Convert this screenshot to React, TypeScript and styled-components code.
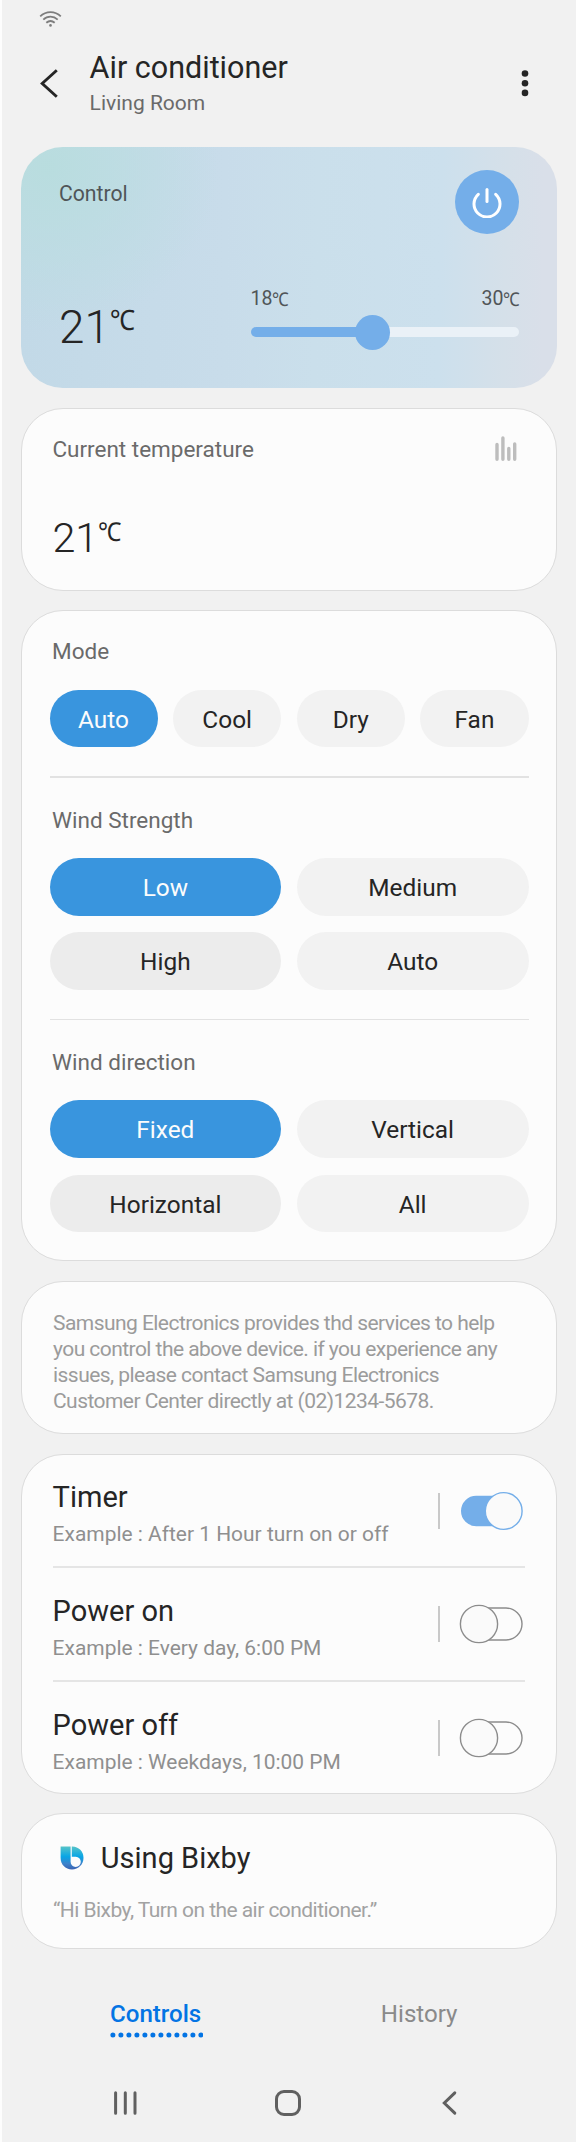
import React, { useState } from 'react';
import styled, { createGlobalStyle } from 'styled-components';

const GlobalStyle = createGlobalStyle`
  * { box-sizing: border-box; }
  body { margin: 0; background: #f1f1f1; }
  button { font: inherit; color: inherit; border: 0; padding: 0; background: none; cursor: pointer; }
  svg { display: block; flex: none; }
`;

const Screen = styled.div`
  display: flex;
  flex-direction: column;
  width: 576px;
  height: 2142px;
  border-left: 2px solid #fdfdfd;
  background: #f1f1f1;
  color: #252525;
  font-family: Roboto, 'Noto Sans', sans-serif;
  overflow: hidden;
`;

const StatusBar = styled.div`
  height: 42px;
  padding: 10px 0 0 37px;
`;

const Header = styled.header`
  display: flex;
  align-items: flex-start;
  height: 105px;
  padding: 0 47px 0 37px;
`;

const BackButton = styled.button`
  width: 20px;
  margin-top: 26px;
`;

const HeaderText = styled.div`
  flex: 1;
  padding: 7px 0 0 30.6px;
`;

const Title = styled.h1`
  margin: 0;
  font-size: 30.5px;
  font-weight: 400;
  line-height: 38px;
`;

const Subtitle = styled.div`
  margin-top: 2px;
  color: #6a6a6a;
  font-size: 21px;
  line-height: 28px;
`;

const MoreButton = styled.button`
  margin-top: 27px;
`;

const Cards = styled.main`
  display: flex;
  flex-direction: column;
  gap: 19.5px;
  padding: 0 19px;
`;

const Card = styled.section<{ $height: number }>`
  height: ${(p) => p.$height}px;
  border: 1px solid #dcdcdc;
  border-radius: 42px;
  background: #fcfcfc;
`;

const ControlCard = styled.section`
  display: flex;
  flex-direction: column;
  justify-content: space-between;
  height: 241px;
  padding: 22.5px 38.5px 38px 38px;
  border-radius: 42px;
  background:
    radial-gradient(ellipse 170px 165px at 5% 8%, rgba(184, 221, 222, 0.95) 0%, rgba(186, 221, 224, 0.7) 40%, rgba(192, 219, 229, 0) 100%),
    linear-gradient(91deg, #c2d9e7 0%, #c8dcea 38%, #cadfeb 55%, #cce0ed 78%, #d5e0e9 90%, #d9dfe9 97%);
`;

const ControlTop = styled.div`
  display: flex;
  justify-content: space-between;
`;

const ControlLabel = styled.div`
  padding-top: 10.5px;
  color: #505558;
  font-size: 21.2px;
  line-height: 28px;
`;

const PowerButton = styled.button`
  display: flex;
  align-items: center;
  justify-content: center;
  width: 64px;
  height: 64px;
  border-radius: 50%;
  background: #74aee9;
`;

const ControlBottom = styled.div`
  display: flex;
  justify-content: space-between;
  align-items: flex-end;
`;

const Reading = styled.div<{ $size: number; $drop?: number }>`
  display: flex;
  align-items: flex-start;
  margin-bottom: -${(p) => p.$drop ?? 0}px;
  font-size: ${(p) => p.$size}px;
  font-weight: 300;
  line-height: 50px;
`;

const Unit = styled.span<{ $size: number; $lift?: number }>`
  display: inline-block;
  margin-top: ${(p) => p.$lift ?? 0}px;
  font-family: 'Noto Sans', sans-serif;
  font-size: ${(p) => p.$size}px;
  font-weight: 400;
  line-height: 30px;
  transform: scaleX(0.9);
  transform-origin: left center;
`;

const SliderBlock = styled.div`
  width: 268px;
`;

const SliderLabels = styled.div`
  display: flex;
  justify-content: space-between;
  padding: 0 0 2px 0;
  color: #505558;
  font-size: 19.5px;
  line-height: 26px;
`;

const SmallReading = styled.span`
  display: flex;
  white-space: nowrap;
`;

const SmallUnit = styled.span`
  width: 15.5px;
  margin-left: -0.5px;
  font-family: 'Noto Sans', sans-serif;
  font-size: 19px;
  transform: scaleX(0.88);
  transform-origin: left center;
`;

const Track = styled.div`
  display: flex;
  align-items: center;
  height: 36px;
`;

const TrackFill = styled.div`
  width: 108px;
  height: 10.5px;
  border-radius: 6px 0 0 6px;
  background: #74aee9;
`;

const Thumb = styled.div`
  width: 35px;
  height: 35px;
  margin: 0 -4px;
  border-radius: 50%;
  background: #74aee9;
  z-index: 1;
`;

const TrackRest = styled.div`
  flex: 1;
  height: 10.5px;
  border-radius: 0 6px 6px 0;
  background: #eaf1f7;
`;

const TemperatureCard = styled(Card)`
  display: flex;
  flex-direction: column;
  padding: 25.5px 39.3px 0 30.4px;
`;

const TemperatureTop = styled.div`
  display: flex;
  justify-content: space-between;
  height: 79px;
`;

const Label = styled.div`
  color: #6a6a6a;
  font-size: 22.5px;
  line-height: 30px;
`;

const ModeCard = styled(Card)`
  padding: 25.4px 27.5px 0 27.5px;
`;

const OptionLabel = styled(Label)`
  height: 53.4px;
  padding-left: 2.6px;
`;

const Options = styled.div<{ $columns: number }>`
  display: grid;
  grid-template-columns: repeat(${(p) => p.$columns}, 1fr);
  gap: 16.5px 15.6px;
`;

const Pill = styled.button<{ $active: boolean; $shade: boolean }>`
  height: 57.7px;
  padding-top: 1.6px;
  border-radius: 29px;
  background: ${(p) => (p.$active ? '#3995de' : p.$shade ? '#ececec' : '#f2f2f2')};
  color: ${(p) => (p.$active ? '#fcfcfc' : '#252525')};
  font-size: 24.4px;
`;

const Divider = styled.hr`
  height: 1.5px;
  margin: 29px 0 26.6px;
  border: 0;
  background: #e2e2e2;
`;

const NoticeCard = styled(Card)`
  padding: 28.7px 31px 0;
  color: #9b9b9b;
  font-size: 21px;
  line-height: 26px;
  letter-spacing: -0.55px;
  white-space: nowrap;
`;

const TimerCard = styled(Card)`
  padding: 0 30.6px;
`;

const TimerRow = styled.div`
  display: flex;
  justify-content: space-between;
  height: 113.7px;
  border-bottom: 2px solid #e5e5e5;

  &:last-child {
    border-bottom: 0;
  }
`;

const TimerText = styled.div`
  padding-top: 24.6px;
`;

const CardTitle = styled.div`
  font-size: 29px;
  line-height: 36px;
`;

const Example = styled.div`
  margin-top: 5px;
  color: #8f8f8f;
  font-size: 20.95px;
  line-height: 28px;
`;

const SwitchArea = styled.div`
  display: flex;
  align-items: center;
  gap: 19px;
  height: 39px;
  margin-top: 36.6px;
  padding-right: 2.2px;
`;

const SwitchRule = styled.div`
  width: 2px;
  height: 36px;
  background: #c9c9c9;
`;

const BixbyCard = styled(Card)`
  padding: 26px 31px 0;
`;

const BixbyHeading = styled.div`
  display: flex;
  align-items: center;
  gap: 16.5px;
  padding: 0 0 0 7.3px;
`;

const Quote = styled.div`
  margin-top: 20px;
  color: #a2a2a2;
  font-size: 21px;
  line-height: 28px;
  letter-spacing: -0.55px;
`;

const Tabs = styled.nav`
  display: flex;
  justify-content: space-between;
  height: 126px;
  padding: 49px 118.5px 0 108px;
`;

const Tab = styled.button<{ $active?: boolean }>`
  display: flex;
  flex-direction: column;
  align-items: flex-start;
  gap: 2px;
  color: ${(p) => (p.$active ? '#0374e4' : '#8a8a8a')};
  font-size: 24.1px;
  font-weight: ${(p) => (p.$active ? 500 : 400)};
  line-height: 32px;
`;

const Navigation = styled.nav`
  display: grid;
  grid-template-columns: 161px 167px auto;
  align-items: center;
  height: 56px;
  padding-left: 111px;
`;

const WifiIcon = () => (
  <svg width="23" height="18" viewBox="0 0 23 18" fill="none" stroke="#7d7d7d" strokeWidth="1.8">
    <path d="M1.2 6.4C7 .7 16 .7 21.8 6.4" />
    <path d="M4.3 9.6C8.5 5.6 14.5 5.6 18.7 9.6" />
    <path d="M7.3 12.8C9.8 10.6 13.2 10.6 15.7 12.8" />
    <circle cx="11.5" cy="15.4" r="1.3" fill="#7d7d7d" stroke="none" />
  </svg>
);

const BackIcon = () => (
  <svg width="20" height="31" viewBox="0 0 20 31" fill="none" stroke="#252525" strokeWidth="2.9">
    <path d="M17.8 2.2 3.2 15.5 17.8 28.8" />
  </svg>
);

const MoreIcon = () => (
  <svg width="8" height="28" viewBox="0 0 8 28" fill="#252525">
    <circle cx="4" cy="4.5" r="3.3" />
    <circle cx="4" cy="14.2" r="3.3" />
    <circle cx="4" cy="23.9" r="3.3" />
  </svg>
);

const PowerIcon = () => (
  <svg width="30" height="32" viewBox="0 0 30 32" fill="none" stroke="#fff" strokeWidth="3" strokeLinecap="round">
    <path d="M15 3.4V15.6" />
    <path d="M6.3 8.3A13 13 0 1 0 23.7 8.3" />
  </svg>
);

const ChartIcon = () => (
  <svg width="22" height="27" viewBox="0 0 22 27" stroke="#bdbdbd" strokeWidth="3.4" strokeLinecap="round">
    <path d="M2 10.4V25.2M7.9 4V25.2M13.8 14.4V25.2M19.7 10V25.2" />
  </svg>
);

const SwitchIcon = ({ on }: { on: boolean }) =>
  on ? (
    <svg width="64" height="40" viewBox="0 0 64 40">
      <path d="M45 4.7H17.3A15.3 15.3 0 0 0 17.3 35.3H45Z" fill="#74aee9" />
      <circle cx="44.7" cy="20" r="18.4" fill="#fafafa" stroke="#74aee9" strokeWidth="1.4" />
    </svg>
  ) : (
    <svg width="64" height="40" viewBox="0 0 64 40" stroke="#8c8c8c" strokeWidth="1.4">
      <rect x="8" y="4" width="55" height="32" rx="16" fill="#fcfcfc" />
      <circle cx="20" cy="20" r="18.6" fill="#fafafa" />
    </svg>
  );

const BixbyIcon = () => (
  <svg width="24" height="24" viewBox="0 0 24 24">
    <defs>
      <linearGradient id="bixby" x1="0" y1="0" x2="0" y2="1">
        <stop offset="0" stopColor="#57c4c8" />
        <stop offset="0.45" stopColor="#07a5e6" />
        <stop offset="0.75" stopColor="#3d83cb" />
        <stop offset="1" stopColor="#3a63b3" />
      </linearGradient>
    </defs>
    <path
      d="M.6.4H12.5A11.2 11.2 0 0 1 23.5 11.7C23.5 18.4 18.4 23.4 12 23.4 5.3 23.4.6 18.6.6 11.8Z"
      fill="url(#bixby)"
    />
    <path d="M10.6 0V15.8A5.1 5.1 0 1 0 15.8 10.7H11.8V0Z" fill="#fcfcfc" />
  </svg>
);

const TabDots = () => (
  <svg width="93" height="6" viewBox="0 0 93 6" fill="#0374e4">
    {Array.from({ length: 12 }, (_, i) => (
      <circle key={i} cx={2.9 + i * 8} cy="3" r="2.5" />
    ))}
  </svg>
);

const RecentsIcon = () => (
  <svg width="26" height="26" viewBox="0 0 26 26" stroke="#606060" strokeWidth="3" strokeLinecap="round">
    <path d="M2.6 2.8V23.2M12.3 2.8V23.2M22 2.8V23.2" />
  </svg>
);

const HomeIcon = () => (
  <svg width="28" height="28" viewBox="0 0 28 28" fill="none" stroke="#606060" strokeWidth="3">
    <rect x="2.5" y="2.5" width="23" height="23" rx="7.5" />
  </svg>
);

const NavBackIcon = () => (
  <svg width="16" height="26" viewBox="0 0 16 26" fill="none" stroke="#606060" strokeWidth="3" strokeLinecap="round">
    <path d="M13.8 2.8 3.3 13 13.8 23.2" />
  </svg>
);

const groups = [
  { label: 'Mode', columns: 4, options: ['Auto', 'Cool', 'Dry', 'Fan'] },
  { label: 'Wind Strength', columns: 2, options: ['Low', 'Medium', 'High', 'Auto'] },
  { label: 'Wind direction', columns: 2, options: ['Fixed', 'Vertical', 'Horizontal', 'All'] },
];

const timers = [
  { title: 'Timer', example: 'After 1 Hour turn on or off' },
  { title: 'Power on', example: 'Every day, 6:00 PM' },
  { title: 'Power off', example: 'Weekdays, 10:00 PM' },
];

export default function App() {
  const [selected, setSelected] = useState([0, 0, 0]);
  const [switches, setSwitches] = useState([true, false, false]);

  return (
    <Screen>
      <GlobalStyle />
      <StatusBar>
        <WifiIcon />
      </StatusBar>
      <Header>
        <BackButton aria-label="Back">
          <BackIcon />
        </BackButton>
        <HeaderText>
          <Title>Air conditioner</Title>
          <Subtitle>Living Room</Subtitle>
        </HeaderText>
        <MoreButton aria-label="More">
          <MoreIcon />
        </MoreButton>
      </Header>

      <Cards>
        <ControlCard>
          <ControlTop>
            <ControlLabel>Control</ControlLabel>
            <PowerButton aria-label="Power">
              <PowerIcon />
            </PowerButton>
          </ControlTop>
          <ControlBottom>
            <Reading $size={45.8} $drop={3}>
              21<Unit $size={28} $lift={1}>℃</Unit>
            </Reading>
            <SliderBlock>
              <SliderLabels>
                <SmallReading>
                  18<SmallUnit>℃</SmallUnit>
                </SmallReading>
                <SmallReading>
                  30<SmallUnit>℃</SmallUnit>
                </SmallReading>
              </SliderLabels>
              <Track>
                <TrackFill />
                <Thumb />
                <TrackRest />
              </Track>
            </SliderBlock>
          </ControlBottom>
        </ControlCard>

        <TemperatureCard $height={183}>
          <TemperatureTop>
            <Label>Current temperature</Label>
            <ChartIcon />
          </TemperatureTop>
          <Reading $size={41.3}>
            21<Unit $size={26} $lift={3}>℃</Unit>
          </Reading>
        </TemperatureCard>

        <ModeCard $height={651}>
          {groups.map((group, g) => (
            <React.Fragment key={group.label}>
              {g > 0 && <Divider />}
              <OptionLabel>{group.label}</OptionLabel>
              <Options $columns={group.columns}>
                {group.options.map((option, i) => (
                  <Pill
                    key={option}
                    $active={selected[g] === i}
                    $shade={group.columns === 2 && i === 2}
                    onClick={() => setSelected(selected.map((s, n) => (n === g ? i : s)))}
                  >
                    {option}
                  </Pill>
                ))}
              </Options>
            </React.Fragment>
          ))}
        </ModeCard>

        <NoticeCard $height={153.7}>
          Samsung Electronics provides thd services to help
          <br />
          you control the above device. if you experience any
          <br />
          issues, please contact Samsung Electronics
          <br />
          Customer Center directly at (02)1234-5678.
        </NoticeCard>

        <TimerCard $height={340}>
          {timers.map((timer, i) => (
            <TimerRow key={timer.title}>
              <TimerText>
                <CardTitle>{timer.title}</CardTitle>
                <Example>Example : {timer.example}</Example>
              </TimerText>
              <SwitchArea>
                <SwitchRule />
                <button
                  aria-label={timer.title}
                  onClick={() => setSwitches(switches.map((s, n) => (n === i ? !s : s)))}
                >
                  <SwitchIcon on={switches[i]} />
                </button>
              </SwitchArea>
            </TimerRow>
          ))}
        </TimerCard>

        <BixbyCard $height={136.3}>
          <BixbyHeading>
            <BixbyIcon />
            <CardTitle>Using Bixby</CardTitle>
          </BixbyHeading>
          <Quote>“Hi Bixby, Turn on the air conditioner.”</Quote>
        </BixbyCard>
      </Cards>

      <Tabs>
        <Tab $active>
          Controls
          <TabDots />
        </Tab>
        <Tab>History</Tab>
      </Tabs>
      <Navigation>
        <RecentsIcon />
        <HomeIcon />
        <NavBackIcon />
      </Navigation>
    </Screen>
  );
}
